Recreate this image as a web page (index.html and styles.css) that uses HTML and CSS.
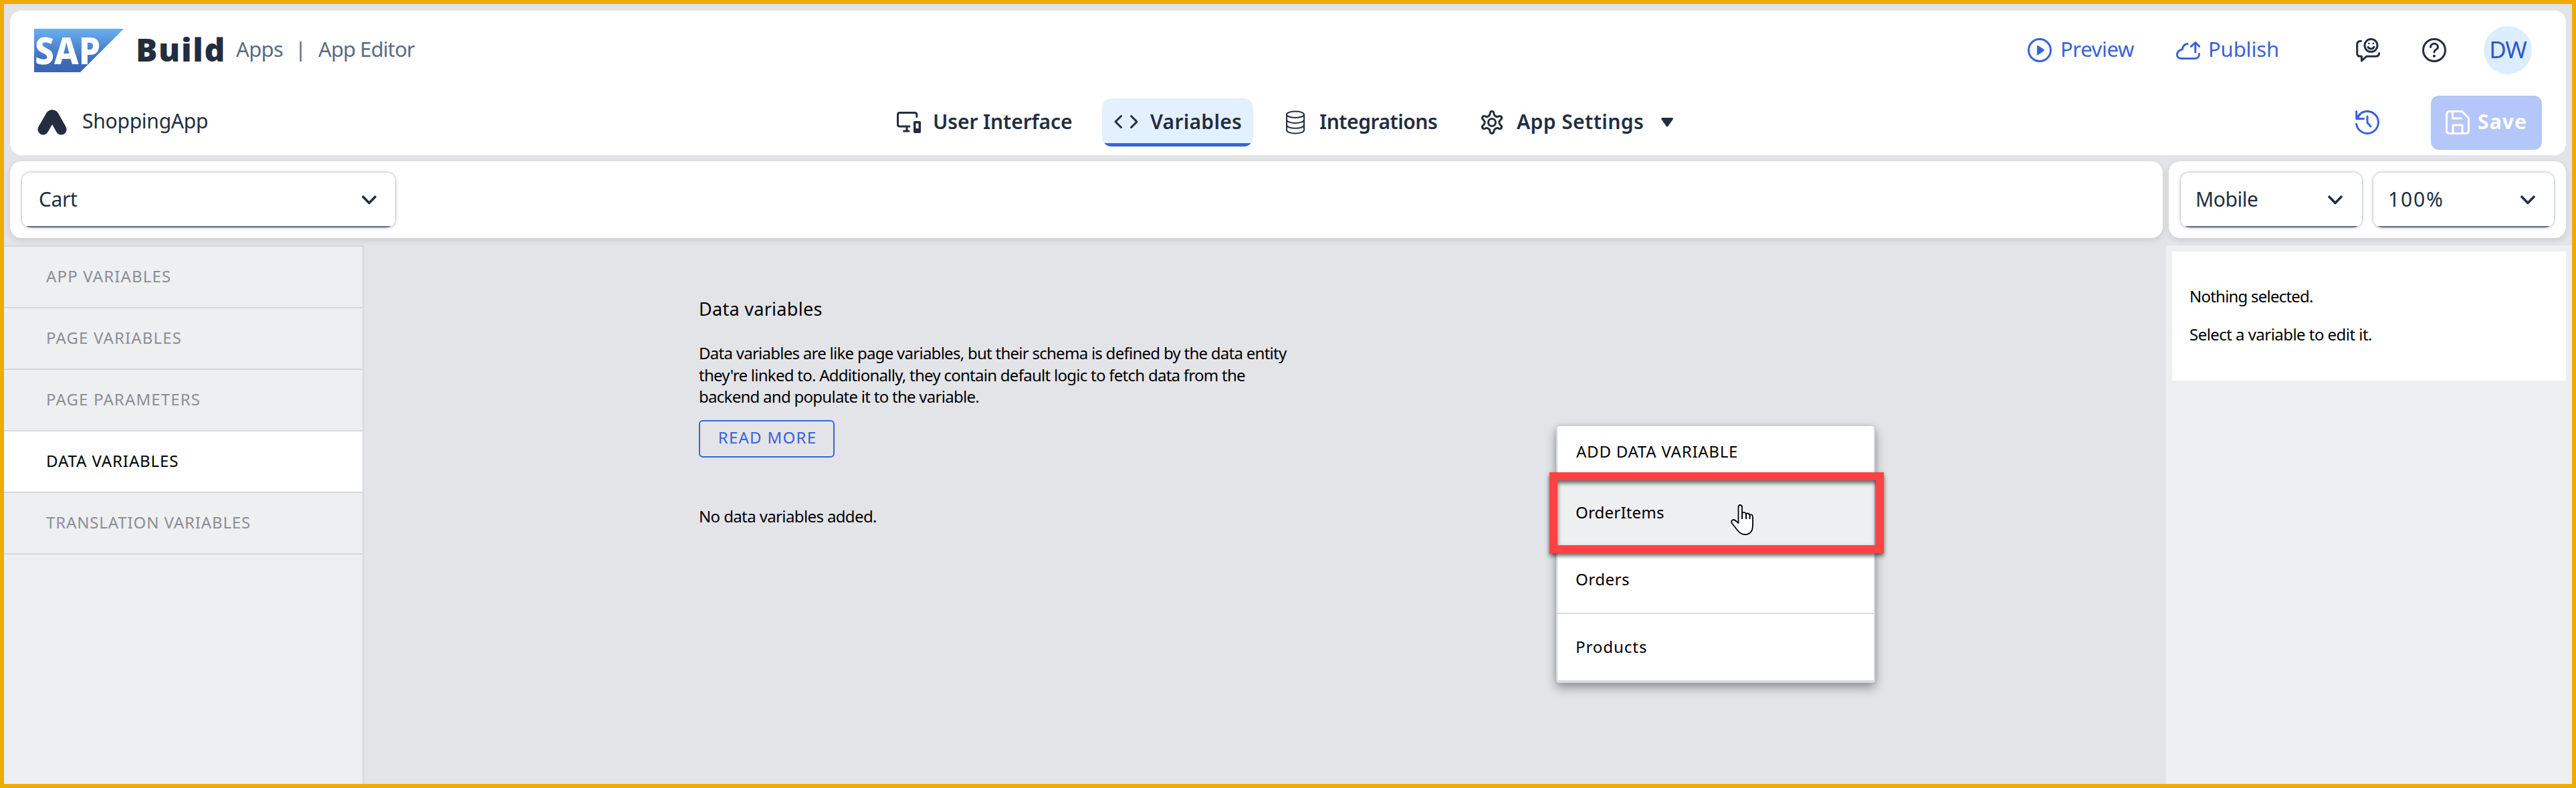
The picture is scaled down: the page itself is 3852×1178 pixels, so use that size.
FILE: index.html
```html
<!DOCTYPE html>
<html lang="en">
<head>
<meta charset="utf-8">
<title>SAP Build Apps - App Editor</title>
<link rel="stylesheet" href="styles.css">
</head>
<body>
<header class="header">
  <div class="shell">
    <svg class="logo" viewBox="0 0 134 65">
      <defs><linearGradient id="sap" x1="0" y1="0" x2="0" y2="1"><stop offset="0" stop-color="#69b0f0"/><stop offset=".5" stop-color="#4a80cb"/><stop offset=".8" stop-color="#3e68b8"/><stop offset="1" stop-color="#3c63b3"/></linearGradient></defs>
      <path d="M0 0H134L69 65H0Z" fill="url(#sap)"/>
      <text class="logo-text" x="1" y="53" textLength="98" lengthAdjust="spacingAndGlyphs">SAP</text>
    </svg>
    <span class="product">Build</span>
    <span class="crumb crumb-apps">Apps</span>
    <span class="crumb crumb-sep">|</span>
    <span class="crumb crumb-editor">App Editor</span>
    <div class="shell-actions">
      <a class="action preview">
        <svg class="icon" viewBox="0 0 36 36"><circle cx="18" cy="18" r="16.5" class="line"/><path d="M14 12.3Q14 10 16 11.2L24 16.600Q25.500 18 24 19.300L16 24.900Q14 26 14 23.700Z" fill="currentColor"/></svg>
        <span>Preview</span>
      </a>
      <a class="action publish">
        <svg class="icon" viewBox="0 0 36 36"><path class="line" d="M17 8.500C13 9 10 12 9.500 16.500C4.500 18 1.500 21 1.500 25C1.500 28.500 4.500 30.500 8 30.500H28C32 30.500 34.500 27.500 34.500 23.500M28.800 21V7M22.500 12.500L28.800 6.500L35 12.500"/></svg>
        <span>Publish</span>
      </a>
      <div class="tool feedback">
        <svg class="icon" viewBox="0 0 36 36"><path class="line" d="M7.500 4.500H6.500C3.500 4.500 1.700 6.500 1.700 9.500V22.500C1.700 25.500 3.500 27.300 6.500 27.300H8.500V34L15.500 27.300H29.500C32.500 27.300 34.500 25.500 34.500 22.500"/><circle cx="22.500" cy="11" r="9.500" class="line"/><path class="line" d="M18 13.300C20 17 25 17 27 13.300" stroke-width="2.600"/><circle cx="19.300" cy="8" r="1.300" fill="currentColor"/><circle cx="25.700" cy="8" r="1.300" fill="currentColor"/></svg>
      </div>
      <div class="tool help">
        <svg class="icon" viewBox="0 0 36 36"><circle cx="18" cy="18" r="16.500" class="line"/><path class="line" d="M12.500 13.500C12.500 6.500 23.500 6.500 23.500 13.500C23.500 17.500 18 16.500 18 21"/><circle cx="18" cy="26.800" r="2.100" fill="currentColor"/></svg>
      </div>
      <div class="avatar">DW</div>
    </div>
  </div>
  <div class="appbar">
    <div class="app">
      <svg class="app-icon" viewBox="0 0 44 38"><path d="M8.500 29.500L20 9.500" stroke="#232d3f" stroke-width="16" stroke-linecap="round"/><path d="M24 9L35.500 29.500" stroke="#232d3f" stroke-width="16" stroke-linecap="round"/><circle cx="22" cy="9.500" r="9.500" fill="#232d3f"/></svg>
      <span class="app-name">ShoppingApp</span>
    </div>
    <nav class="tabs">
      <a class="tab tab-ui">
        <svg class="icon" viewBox="0 0 36 36"><path class="line" d="M29.800 9.500V6.500Q29.800 3.500 26.800 3.500H4.500Q1.500 3.500 1.500 6.500V21Q1.500 24 4.500 24H19M15 24V31M10.500 31H18"/><path fill-rule="evenodd" fill="currentColor" d="M27 16H34Q36 16 36 18V32Q36 34 34 34H27Q25 34 25 32V18Q25 16 27 16ZM28.500 19.500V27H32.500V19.500Z"/></svg>
        <span>User Interface</span>
      </a>
      <a class="tab tab-vars">
        <svg class="icon" viewBox="0 0 36 36"><path class="line" d="M10.500 8.500L2 17L10.500 25.500M25.500 8.500L34 17L25.500 25.500" stroke-width="3.500"/></svg>
        <span>Variables</span>
      </a>
      <a class="tab tab-int">
        <svg class="icon" viewBox="0 0 36 36"><g class="line thin"><ellipse cx="18" cy="6.200" rx="13" ry="4.700"/><path d="M5 6.200V29.500C5 36 31 36 31 29.500V6.200M5 14C5 20.500 31 20.500 31 14M5 21.800C5 28.300 31 28.300 31 21.800"/></g></svg>
        <span>Integrations</span>
      </a>
      <a class="tab tab-set">
        <svg class="icon" viewBox="0 0 36 36"><path class="line" d="M15.300 3.800Q15.800 1.500 18 1.500T20.700 3.800L21.300 6.500Q22 8 23.600 8.900T26.500 9.500L29 8.600Q31 8 32.200 9.900T31.600 13.400L30 15Q28.800 16.500 28.800 18T30 21L31.600 22.600Q33.300 24.200 32.200 26.100T29 27.400L26.500 26.500Q25.200 26.200 23.600 27.100T21.300 29.500L20.700 32.200Q20.200 34.500 18 34.500T15.300 32.200L14.700 29.500Q14 28 12.400 27.100T9.500 26.500L7 27.400Q5 28 3.800 26.100T4.400 22.600L6 21Q7.200 19.500 7.200 18T6 15L4.400 13.400Q2.700 11.800 3.800 9.900T7 8.600L9.500 9.500Q10.800 9.800 12.400 8.900T14.700 6.500Z"/><circle cx="18" cy="18" r="5.500" class="line"/></svg>
        <span>App Settings</span>
        <svg class="caret" viewBox="0 0 18 14"><path d="M1.500 0H16.500Q18.500 .5 17.500 2.500L10.500 12.500Q9 14.500 7.500 12.500L.5 2.500Q-.5 .5 1.500 0Z" fill="currentColor"/></svg>
      </a>
    </nav>
    <div class="appbar-actions">
      <svg class="icon history" viewBox="0 0 36 36"><path class="line" d="M1.600 20.500A16.500 16.500 0 1 0 4 9M1.700 1.500V12.500H12.500M3 12L7 6M18 9V18.500L23 24"/></svg>
      <button class="save">
        <svg class="icon" viewBox="0 0 36 36"><path class="line" d="M6 1.500H24.500L34.500 11.500V30Q34.500 34.500 30 34.500H6Q1.500 34.500 1.500 30V6Q1.500 1.500 6 1.500ZM10.500 2V12H23.500M11 34V22H25V34"/></svg>
        <span>Save</span>
      </button>
    </div>
  </div>
</header>

<div class="toolbar">
  <div class="panel panel-page">
    <div class="select select-page"><span>Cart</span><svg class="chevron" viewBox="0 0 22 14"><path class="line" d="M2 2.200L11 11.500L20 2.200"/></svg></div>
  </div>
  <div class="panel panel-view">
    <div class="select select-device"><span>Mobile</span><svg class="chevron" viewBox="0 0 22 14"><path class="line" d="M2 2.200L11 11.500L20 2.200"/></svg></div>
    <div class="select select-zoom"><span>100%</span><svg class="chevron" viewBox="0 0 22 14"><path class="line" d="M2 2.200L11 11.500L20 2.200"/></svg></div>
  </div>
</div>

<main class="workspace">
  <aside class="sidebar">
    <a class="side-item">APP VARIABLES</a>
    <a class="side-item">PAGE VARIABLES</a>
    <a class="side-item">PAGE PARAMETERS</a>
    <a class="side-item active">DATA VARIABLES</a>
    <a class="side-item translation">TRANSLATION VARIABLES</a>
  </aside>
  <section class="content">
    <h1 class="title">Data variables</h1>
    <p class="intro">Data variables are like page variables, but their schema is defined by the data entity<br>they're linked to. Additionally, they contain default logic to fetch data from the<br>backend and populate it to the variable.</p>
    <button class="read-more">READ MORE</button>
    <p class="empty">No data variables added.</p>
  </section>
  <aside class="inspector">
    <div class="inspector-card">
      <p class="nothing">Nothing selected.</p>
      <p class="hint">Select a variable to edit it.</p>
    </div>
  </aside>
</main>

<div class="menu">
  <div class="menu-title">ADD DATA VARIABLE</div>
  <div class="menu-item hover">OrderItems</div>
  <div class="menu-item orders">Orders</div>
  <div class="menu-item products">Products</div>
</div>
<div class="highlight"></div>
<svg class="cursor" viewBox="0 0 34 46"><path d="M11.500 28V4Q11.500 1 14 1T17 4V12.500Q21.500 11.500 23 14Q26.500 12.500 28.500 15.500Q33 14.500 33 19V31Q33 45 21 45Q15 45 10 38.500L2 28.500Q0 25 2.500 23.500T8 25Z" fill="#fff" stroke="#000" stroke-width="1.800" stroke-linejoin="round"/><path d="M17 12V22M23 14V22M28.500 15.500V22" fill="none" stroke="#000" stroke-width="2"/></svg>
</body>
</html>
```
FILE: styles.css
```css
* { box-sizing: border-box; }
body {
  margin: 0;
  width: 3852px;
  height: 1178px;
  border: 6px solid #f0ab00;
  background: #e3e4e8;
  font-family: "Noto Sans", sans-serif;
  color: #000;
  overflow: hidden;
  display: flex;
  flex-direction: column;
  position: relative;
}
h1, p { margin: 0; font-weight: 400; }
a, span, p, h1 { white-space: nowrap; }
button { font-family: inherit; }
svg { display: block; flex: none; }
.line { fill: none; stroke: currentColor; stroke-width: 3; stroke-linecap: round; stroke-linejoin: round; }
.line.thin { stroke-width: 2; }
.icon { width: 36px; height: 36px; }

/* Header */
.header { flex: none; height: 216px; margin: 10px 9px 0; background: #fff; border-radius: 17px; color: #232d3f; }
.shell { height: 118px; padding: 0 51px 0 36px; display: flex; align-items: center; }
.logo { width: 134px; height: 65px; overflow: visible; }
.logo-text { font: 800 56px "Noto Sans", sans-serif; fill: #fff; }
.product { width: 150px; margin-left: 18px; font-size: 48px; font-weight: 900; line-height: 64px; letter-spacing: 1.72px; padding-bottom: 2px; }
.crumb { font-size: 31px; line-height: 40px; padding-bottom: 4px; color: #5b6b82; }
.crumb-apps { width: 88px; letter-spacing: -.65px; }
.crumb-sep { width: 35px; }
.crumb-editor { letter-spacing: -.92px; }
.shell-actions { margin-left: auto; display: flex; align-items: center; }
.action { display: flex; align-items: center; gap: 13px; font-size: 31px; line-height: 40px; color: #3a62d8; }
.action span { padding-bottom: 4px; }
.preview { width: 222px; letter-spacing: -.4px; }
.publish { width: 269px; letter-spacing: -.14px; gap: 12px; }
.feedback { width: 99px; }
.help { width: 92px; }
.avatar { width: 72px; height: 72px; border-radius: 50%; background: #dceefe; color: #3155cf; font-size: 35px; line-height: 69px; letter-spacing: -1.2px; text-align: center; }

.appbar { height: 98px; padding-right: 36px; display: flex; align-items: center; }
.app { width: 1308px; padding-left: 41px; display: flex; align-items: center; gap: 23px; }
.app-icon { width: 44px; height: 38px; }
.app-name { font-size: 30px; line-height: 40px; letter-spacing: -.24px; padding-bottom: 4px; }
.tabs { display: flex; gap: 28px; }
.tab { height: 72px; padding: 0 18px; display: flex; align-items: center; gap: 18px; border-radius: 14px; font-size: 30px; font-weight: 600; line-height: 40px; }
.tab span { padding-bottom: 3px; }
.tab-ui { width: 297px; letter-spacing: -.1px; }
.tab-vars { width: 226px; margin-right: -1px; background: linear-gradient(to top, #3a62d8 5px, #e3f1fe 5px); letter-spacing: .28px; }
.tab-int { width: 266px; letter-spacing: -.46px; }
.tab-set { letter-spacing: .42px; gap: 16px; }
.tab-set span { width: 200px; margin-left: 3px; }
.caret { width: 18px; height: 14px; }
.appbar-actions { margin-left: auto; display: flex; align-items: center; }
.history { color: #3a62d8; margin-right: 77px; }
.save { width: 166px; height: 81px; padding: 0 0 0 22px; border: 0; border-radius: 12px; background: #b4c6fa; color: #fff; display: flex; align-items: center; gap: 12px; font-size: 30px; font-weight: 700; line-height: 40px; letter-spacing: 1.12px; }
.save span { padding-bottom: 2px; }

/* Page and preview selectors */
.toolbar { flex: none; height: 115px; margin: 9px 9px 0; display: flex; gap: 9px; position: relative; z-index: 1; }
.panel { background: #fff; border-radius: 17px; padding: 17px 18px; display: flex; gap: 17px; box-shadow: 0 3px 9px rgba(60, 60, 70, .15); }
.panel-page { flex: 1; }
.panel-view { width: 594px; }
.select { height: 82px; border-radius: 13px; display: flex; align-items: center; justify-content: space-between; color: #232d3f; font-size: 30px; line-height: 40px; background: linear-gradient(to top, #5b6b82 2px, #fff 2px); box-shadow: 0 0 4px rgba(70, 90, 120, .6); }
.select span { padding-bottom: 2px; }
.select-page { width: 558px; padding: 0 28px 0 25px; letter-spacing: -.39px; }
.select-device { flex: 1; padding: 0 29px 0 22px; letter-spacing: -.46px; }
.select-zoom { flex: 1; padding: 0 28px 0 22px; }
.select-zoom span { letter-spacing: 1.84px; }
.chevron { width: 22px; height: 14px; }
.chevron .line { stroke-width: 3.600; }

/* Workspace */
.workspace { flex: 1; margin-top: 11px; display: flex; min-height: 0; }
.sidebar { width: 538px; border-top: 2px solid #d7d8dd; border-right: 2px solid #d7d8dd; background: #eeeff1; }
.side-item { display: block; height: 92px; padding-left: 63px; border-bottom: 2px solid #d7d8dd; font-size: 24px; line-height: 87px; letter-spacing: 1.140px; color: #8b8e97; }
.side-item.active { background: #fff; color: #000; letter-spacing: .9px; }
.side-item.translation { letter-spacing: .87px; }
.content { flex: 1; padding: 77px 0 0 501px; font-size: 24px; display: flex; flex-direction: column; align-items: flex-start; }
.title { font-size: 27px; line-height: 36px; letter-spacing: .29px; }
.intro { margin-top: 32px; line-height: 32.700px; letter-spacing: -.73px; }
.read-more { width: 203px; height: 56px; margin-top: 18px; padding: 0 0 5px 2px; border: 2px solid #3a62d8; border-radius: 6px; background: none; color: #3a62d8; font-size: 24px; letter-spacing: 1.270px; white-space: nowrap; }
.empty { margin-top: 72px; line-height: 32px; letter-spacing: -.62px; }
.inspector { width: 607px; background: #eeeff1; padding: 9px 9px 0; }
.inspector-card { height: 193px; background: #fff; padding: 50px 0 0 26px; font-size: 24px; line-height: 34px; }
.nothing { letter-spacing: -.78px; }
.hint { margin-top: 23px; letter-spacing: -.54px; }

/* Menu floating above the canvas */
.menu { position: absolute; left: 2321px; top: 631px; width: 477px; border: solid #d9dadf; border-width: 0 2px 4px; border-radius: 4px; background: #fff; font-size: 24px; box-shadow: 0 7px 16px rgba(0, 0, 0, .36), 0 0 6px rgba(0, 0, 0, .12); }
.menu-title { height: 80px; padding-left: 28px; line-height: 75px; letter-spacing: .76px; }
.menu-item { height: 101px; padding-left: 27px; border-bottom: 2px solid #d9dadf; line-height: 97px; letter-spacing: .2px; }
.menu-item.hover { height: 100px; background: #eeeff1; }
.products { height: 99px; border-bottom: 0; letter-spacing: .96px; padding-left: 27px; }
.orders { letter-spacing: .5px; }
.highlight { position: absolute; left: 2311px; top: 700px; width: 500px; height: 121px; border: 12px solid #ff4244; filter: drop-shadow(0 4px 3px rgba(0, 0, 0, .6)); }
.cursor { position: absolute; left: 2582px; top: 748px; width: 34px; height: 46px; }
```
